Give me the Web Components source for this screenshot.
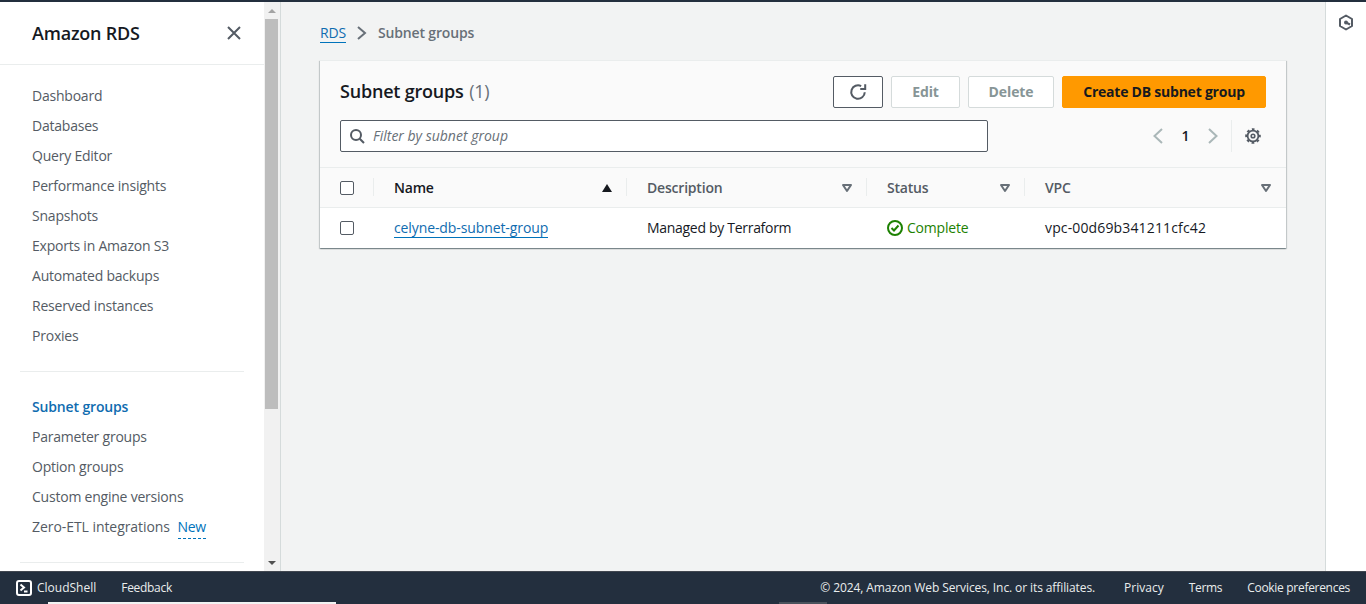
<!DOCTYPE html>
<html lang="en">
<head>
<meta charset="utf-8">
<title>Subnet groups</title>
<style>
  html, body { margin: 0; height: 100%; overflow: hidden; background: #f2f3f3; }
  body { font: 14px/20px "Open Sans", "Noto Sans", sans-serif; color: #16191f; }
</style>
</head>
<body>
<rds-console></rds-console>

<template id="console-tpl">
  <style>
    :host { display: flex; flex-direction: column; height: 604px; border-top: 2px solid #232f3e; box-sizing: border-box; }
    .body { flex: 1; display: flex; min-height: 0; }
    main { flex: 1; min-width: 0; padding: 21px 39px 0 39px; display: flex; flex-direction: column; gap: 17px; }
  </style>
  <div class="body">
    <rds-sidenav></rds-sidenav>
    <rds-scrollbar></rds-scrollbar>
    <main>
      <rds-breadcrumb></rds-breadcrumb>
      <rds-table></rds-table>
    </main>
    <rds-toolrail></rds-toolrail>
  </div>
  <rds-footer></rds-footer>
</template>

<template id="sidenav-tpl">
  <style>
    :host { display: block; width: 264px; flex: none; background: #fff; overflow: hidden; height: 100%; }
    header { height: 63px; box-sizing: border-box; border-bottom: 1px solid #eaeded; display: flex; align-items: center; justify-content: space-between; padding: 0 22px 1px 32px; }
    h2 { margin: 0; font-size: 18px; line-height: 24px; font-weight: 600; color: #16191f; letter-spacing: -.2px; }
    svg { display: block; }
    ul { list-style: none; margin: 0; padding: 0 0 0 32px; }
    li { height: 30px; line-height: 30px; color: #545b64; white-space: nowrap; letter-spacing: -.22px; }
    li.zero { letter-spacing: -.06px; }
    .first { padding-top: 16px; }
    hr { border: 0; border-top: 1px solid #eaeded; margin: 20px 20px 20px 20px; }
    .active { color: #0f6cb0; font-weight: 600; letter-spacing: -.15px; }
    .new { color: #0073bb; margin-left: 4px; border-bottom: 1px dashed #0073bb; padding-bottom: 2px; letter-spacing: -.3px; }
  </style>
  <header>
    <h2>Amazon RDS</h2>
    <svg width="16" height="16" viewBox="0 0 16 16" fill="none" stroke="#545b64" stroke-width="2"><path d="M2 2l12 12M14 2L2 14"/></svg>
  </header>
  <ul class="first">
    <li>Dashboard</li>
    <li>Databases</li>
    <li>Query Editor</li>
    <li>Performance insights</li>
    <li>Snapshots</li>
    <li>Exports in Amazon S3</li>
    <li>Automated backups</li>
    <li>Reserved instances</li>
    <li>Proxies</li>
  </ul>
  <hr>
  <ul>
    <li class="active">Subnet groups</li>
    <li>Parameter groups</li>
    <li>Option groups</li>
    <li>Custom engine versions</li>
    <li class="zero">Zero-ETL integrations <span class="new">New</span></li>
  </ul>
  <hr>
</template>

<template id="scrollbar-tpl">
  <style>
    :host { display: flex; flex-direction: column; width: 16px; flex: none; background: #f1f1f1; border-right: 1px solid #d5dbdb; height: 100%; position: relative; }
    .up, .down { height: 17px; flex: none; display: flex; align-items: center; justify-content: center; }
    .thumb { width: 13px; margin-left: 1px; height: 390px; background: #bdbdbd; flex: none; }
    .track { flex: 1; }
    i { display: block; width: 0; height: 0; border-left: 4px solid transparent; border-right: 4px solid transparent; }
    .up i { border-bottom: 4px solid #a3a3a3; }
    .down i { border-top: 4px solid #505050; }
  </style>
  <div class="up"><i></i></div>
  <div class="thumb"></div>
  <div class="track"></div>
  <div class="down"><i></i></div>
</template>

<template id="breadcrumb-tpl">
  <style>
    :host { display: flex; align-items: center; height: 20px; color: #545b64; font-size: 14px; flex: none; }
    a { color: #0f6cb0; text-decoration: none; border-bottom: 1px solid #0073bb; box-sizing: border-box; height: 20px; letter-spacing: -.2px; }
    svg { margin: 0 10px 0 10px; display: block; }
    b { font-weight: 600; color: #687078; letter-spacing: -.15px; }
  </style>
  <a>RDS</a>
  <svg width="12" height="14" viewBox="0 0 12 14" fill="none" stroke="#687078" stroke-width="2"><path d="M2 1l7 6-7 6"/></svg>
  <b>Subnet groups</b>
</template>

<template id="button-tpl">
  <style>
    :host { display: inline-flex; flex: none; }
    div { box-sizing: border-box; height: 32px; border-radius: 2px; border: 1px solid #d5dbdb; background: #fff; color: #879596; font-weight: 700; font-size: 14px; display: flex; align-items: center; justify-content: center; width: 100%; white-space: nowrap; letter-spacing: -.1px; }
    :host([kind="primary"]) div { background: #ff9900; border-color: #ff9900; color: #16191f; letter-spacing: -.23px; }
    :host([kind="normal"]) div { border-color: #545b64; }
  </style>
  <div><slot></slot></div>
</template>

<template id="table-tpl">
  <style>
    :host { display: block; background: #fafafa; box-shadow: 0 1px 1px 0 rgba(0,28,36,.3), 1px 1px 1px 0 rgba(0,28,36,.15), -1px 1px 1px 0 rgba(0,28,36,.15); flex: none; }
    svg { display: block; flex: none; }
    .top { padding: 15px 20px 16px 20px; height: 108px; box-sizing: border-box; border-bottom: 1px solid #eaeded; border-top: 1px solid #eaeded; }
    .row1 { display: flex; align-items: center; height: 32px; gap: 8px; }
    h1 { margin: -2px auto 0 0; font-size: 18px; line-height: 24px; font-weight: 600; color: #16191f; white-space: nowrap; letter-spacing: -.2px; }
    h1 span { font-weight: 400; color: #687078; margin-left: 1px; }
    .row2 { display: flex; align-items: center; margin-top: 12px; height: 32px; }
    .filter { box-sizing: border-box; width: 648px; height: 32px; background: #fff; border: 1px solid #545b64; border-radius: 2px; display: flex; align-items: center; gap: 8px; padding-left: 8px; color: #687078; font-style: italic; }
    .pager { margin-left: auto; margin-right: 5px; display: flex; align-items: center; }
    .num { font-weight: 600; color: #16191f; width: 39px; text-align: center; }
    .sep { width: 1px; height: 32px; background: #eaeded; margin: 0 13px 0 10px; }
    .grid { display: grid; grid-template-columns: 53px 253px 240px 158px 1fr; }
    .head, .cell { display: flex; align-items: center; box-sizing: border-box; white-space: nowrap; padding-left: 21px; }
    .head { height: 40px; border-bottom: 1px solid #eaeded; font-weight: 600; color: #545b64; position: relative; justify-content: space-between; padding-right: 13px; letter-spacing: -.2px; }
    .head.last { padding-right: 14px; }
    .head.sorted { color: #16191f; }
    .head + .head::before { content: ""; position: absolute; left: 0; top: 10px; height: 18px; width: 1px; background: #eaeded; }
    .cell { height: 40px; background: #fff; color: #16191f; }
    .head.box, .cell.box { padding-left: 20px; }
    .check { box-sizing: border-box; width: 14px; height: 14px; border: 1px solid #545b64; border-radius: 2px; background: #fff; }
    a { color: #0f6cb0; border-bottom: 1px solid #0073bb; box-sizing: border-box; height: 20px; letter-spacing: -.1px; }
    .ok { color: #1d8102; gap: 4px; letter-spacing: -.2px; }
    .desc { letter-spacing: -.3px; }
    .vpc { letter-spacing: .14px; }
  </style>
  <div class="top">
    <div class="row1">
      <h1>Subnet groups <span>(1)</span></h1>
      <rds-button kind="normal" style="width:50px"><svg width="18" height="18" viewBox="0 0 16 16" fill="none" stroke="#545b64" stroke-width="1.800"><path d="M14 8.200A6 6 0 1 1 10.800 2.700"/><path d="M14.400 1v4.400H10"/></svg></rds-button>
      <rds-button style="width:69px">Edit</rds-button>
      <rds-button style="width:86px">Delete</rds-button>
      <rds-button kind="primary" style="width:204px">Create DB subnet group</rds-button>
    </div>
    <div class="row2">
      <div class="filter">
        <svg width="16" height="16" viewBox="0 0 16 16" fill="none" stroke="#545b64" stroke-width="2"><circle cx="7" cy="7" r="5"/><path d="M10.700 10.700L15 15"/></svg>
        <span>Filter by subnet group</span>
      </div>
      <div class="pager">
        <svg width="16" height="16" viewBox="0 0 16 16" fill="none" stroke="#aab7b8" stroke-width="2"><path d="M12 1L4.500 8l7.500 7"/></svg>
        <span class="num">1</span>
        <svg width="16" height="16" viewBox="0 0 16 16" fill="none" stroke="#aab7b8" stroke-width="2"><path d="M4 1l7.500 7L4 15"/></svg>
        <span class="sep"></span>
        <svg width="16" height="16" viewBox="0 0 16 16" fill="none" stroke="#545b64"><circle cx="8" cy="8" r="5.400" stroke-width="1.800"/><circle cx="8" cy="8" r="6.800" stroke-width="2" stroke-dasharray="2.700 2.640" stroke-dashoffset="1.350"/><circle cx="8" cy="8" r="1.800" stroke-width="1.600"/></svg>
      </div>
    </div>
  </div>
  <div class="grid">
    <div class="head box"><span class="check"></span></div>
    <div class="head sorted">Name <svg width="12" height="10" viewBox="0 0 12 10"><path d="M6 1l5 8H1z" fill="#16191f"/></svg></div>
    <div class="head">Description <svg width="12" height="10" viewBox="0 0 12 10" fill="none" stroke="#687078" stroke-width="2"><path d="M2 2h8L6 8z" stroke-linejoin="round"/></svg></div>
    <div class="head">Status <svg width="12" height="10" viewBox="0 0 12 10" fill="none" stroke="#687078" stroke-width="2"><path d="M2 2h8L6 8z" stroke-linejoin="round"/></svg></div>
    <div class="head last">VPC <svg width="12" height="10" viewBox="0 0 12 10" fill="none" stroke="#687078" stroke-width="2"><path d="M2 2h8L6 8z" stroke-linejoin="round"/></svg></div>
    <div class="cell box"><span class="check"></span></div>
    <div class="cell"><a>celyne-db-subnet-group</a></div>
    <div class="cell desc">Managed by Terraform</div>
    <div class="cell ok"><svg width="16" height="16" viewBox="0 0 16 16" fill="none" stroke="#1d8102" stroke-width="2"><circle cx="8" cy="8" r="7"/><path d="M4.500 8l2.500 2.500L11.500 5.500"/></svg>Complete</div>
    <div class="cell vpc">vpc-00d69b341211cfc42</div>
  </div>
</template>

<template id="toolrail-tpl">
  <style>
    :host { display: block; width: 41px; flex: none; background: #fff; border-left: 1px solid #d5dbdb; box-sizing: border-box; height: 100%; padding: 12px 0 0 12px; }
    svg { display: block; }
  </style>
  <svg width="16" height="17" viewBox="0 0 16 17" fill="none" stroke="#545b64" stroke-width="2"><path d="M8 1.500l6 3.500v7l-6 3.500-6-3.500V5z" stroke-linejoin="round"/><circle cx="8" cy="8.500" r="2" fill="#545b64" stroke="none"/><path d="M8 8.500l4 2"/></svg>
</template>

<template id="footer-tpl">
  <style>
    :host { display: flex; align-items: center; flex: none; box-sizing: border-box; background: #232f3e; color: #eaeded; font-size: 12px; padding: 0 16px; position: relative; border-top: 1px solid #414750; height: 33px; }
    svg { display: block; margin-right: 5px; }
    .fb { margin-left: 25px; letter-spacing: -.3px; }
    .right { margin-left: auto; display: flex; }
    .right span:nth-child(1) { letter-spacing: -.1px; }
    .right span:nth-child(2) { margin-left: 29px; }
    .right span:nth-child(3), .right span:nth-child(4) { margin-left: 25px; letter-spacing: -.3px; }
    u { position: absolute; bottom: 0; height: 2px; }
  </style>
  <svg width="16" height="16" viewBox="0 0 16 16" fill="none" stroke="#fff" stroke-width="2"><rect x="1" y="1" width="14" height="14" rx="2"/><path d="M4.500 4.500L8 7.500l-3.500 3"/><path d="M8 11.500h3.500"/></svg>
  <span>CloudShell</span>
  <span class="fb">Feedback</span>
  <div class="right">
    <span>© 2024, Amazon Web Services, Inc. or its affiliates.</span>
    <span>Privacy</span>
    <span>Terms</span>
    <span>Cookie preferences</span>
  </div>
  <u style="left:48px;width:288px;background:#f1f3f3"></u>
  <u style="left:779px;width:48px;background:#4a525c"></u>
</template>

<script>
  // each element just stamps its template into an open shadow root
  function define(tag, tplId) {
    customElements.define(tag, class extends HTMLElement {
      constructor() {
        super();
        this.attachShadow({ mode: 'open' });
        const tpl = document.getElementById(tplId);
        this.shadowRoot.appendChild(tpl.content.cloneNode(true));
      }
    });
  }
  define('rds-console', 'console-tpl');
  define('rds-sidenav', 'sidenav-tpl');
  define('rds-scrollbar', 'scrollbar-tpl');
  define('rds-breadcrumb', 'breadcrumb-tpl');
  define('rds-button', 'button-tpl');
  define('rds-table', 'table-tpl');
  define('rds-toolrail', 'toolrail-tpl');
  define('rds-footer', 'footer-tpl');
</script>
</body>
</html>
